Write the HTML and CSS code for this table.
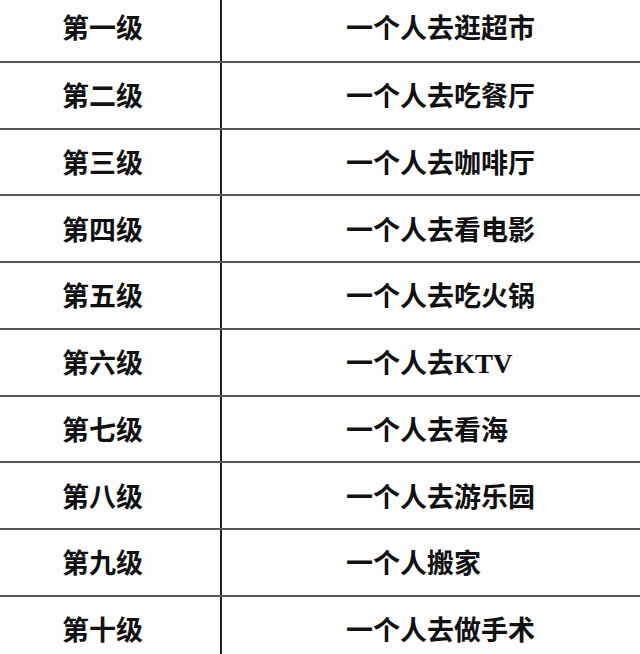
FILE: index.html
```html
<!DOCTYPE html>
<html lang="zh-CN">
<head>
<meta charset="utf-8">
<title>孤独等级</title>
<link rel="stylesheet" href="styles.css">
</head>
<body>
<div class="table">
  <div class="row"><div class="lvl">第一级</div><div class="act">一个人去逛超市</div></div>
  <div class="row"><div class="lvl">第二级</div><div class="act">一个人去吃餐厅</div></div>
  <div class="row"><div class="lvl">第三级</div><div class="act">一个人去咖啡厅</div></div>
  <div class="row"><div class="lvl">第四级</div><div class="act">一个人去看电影</div></div>
  <div class="row"><div class="lvl">第五级</div><div class="act">一个人去吃火锅</div></div>
  <div class="row"><div class="lvl">第六级</div><div class="act">一个人去KTV</div></div>
  <div class="row"><div class="lvl">第七级</div><div class="act">一个人去看海</div></div>
  <div class="row"><div class="lvl">第八级</div><div class="act">一个人去游乐园</div></div>
  <div class="row"><div class="lvl">第九级</div><div class="act">一个人搬家</div></div>
  <div class="row"><div class="lvl">第十级</div><div class="act">一个人去做手术</div></div>
</div>
</body>
</html>
```
FILE: styles.css
```css
html, body {
  margin: 0;
  padding: 0;
  background: #fdfdfd;
  overflow: hidden;
}
body {
  width: 640px;
  height: 654px;
  font-family: "Liberation Serif", "Noto Sans CJK SC", serif;
  font-weight: 700;
  color: #111;
}
.table {
  margin-top: -6px;
  display: flex;
  flex-direction: column;
}
.row {
  display: grid;
  grid-template-columns: 220px 1fr;
  height: 66.75px;
  box-sizing: border-box;
  border-top: 2px solid #555;
}
.row:first-child {
  border-top: none;
}
.lvl, .act {
  display: flex;
  align-items: center;
  font-size: 27px;
  line-height: 1;
  padding-top: 5px;
}
.lvl {
  padding-left: 62px;
}
.act {
  border-left: 2px solid #222;
  padding-left: 124px;
}
```
